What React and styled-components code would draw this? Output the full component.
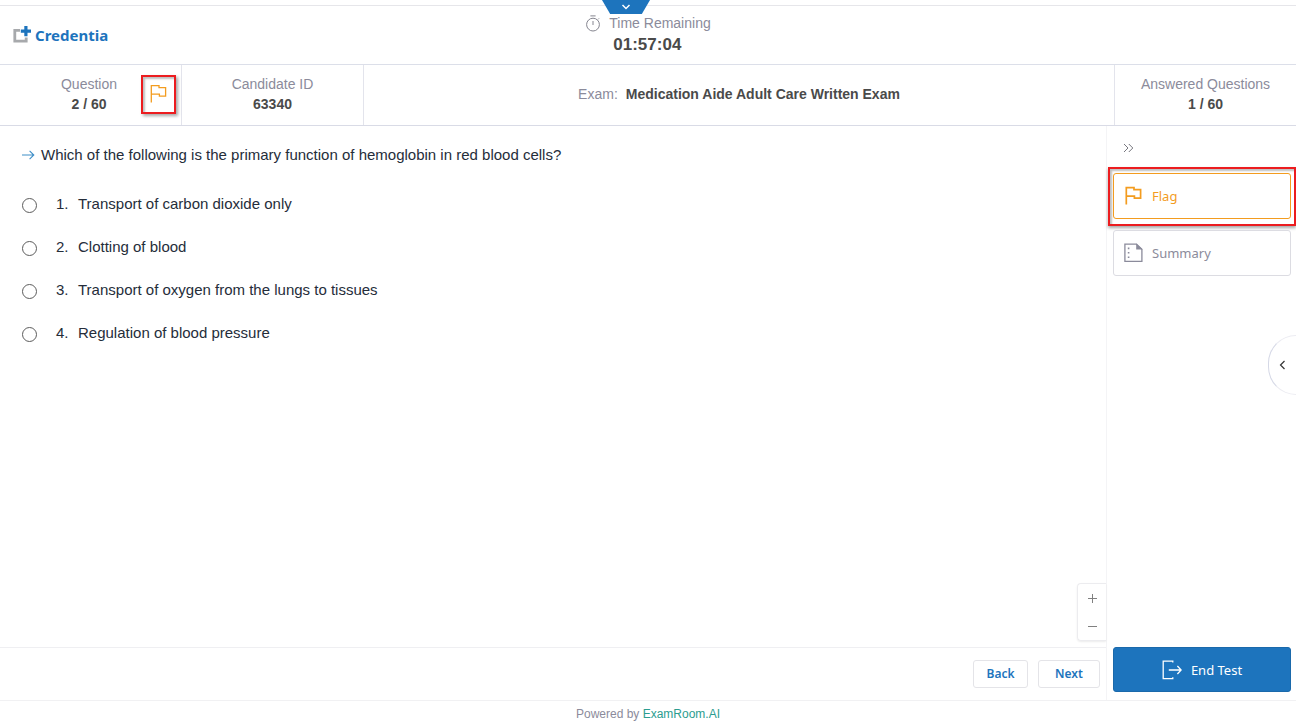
import React from "react";
import styled, { createGlobalStyle } from "styled-components";

const sans = '"Liberation Sans", Arial, sans-serif';
const humanist = '"Noto Sans", "Open Sans", sans-serif';
const blue = "#1d74bd";
const orange = "#f39c1f";
const grey = "#8b8b9b";
const red = "#ec1c1f";

const GlobalStyle = createGlobalStyle`
  *, *::before, *::after { box-sizing: border-box; }
  body { margin: 0; background: #fff; font-family: ${sans}; color: #4a4a4a; overflow-x: hidden; }
  button { font: inherit; cursor: pointer; padding: 0; margin: 0; }
  svg { display: block; flex: none; }
`;

const Page = styled.div`
  position: relative;
  display: flex;
  flex-direction: column;
  min-height: 100vh;
  padding-top: 5px;
`;

const PullTab = styled.button`
  position: absolute;
  top: 0;
  left: 50%;
  margin-left: -46px;
  width: 48px;
  height: 14px;
  border: 0;
  background: ${blue};
  clip-path: polygon(0 0, 100% 0, 83% 100%, 17% 100%);
  display: flex;
  align-items: center;
  justify-content: center;
`;

const Header = styled.header`
  display: grid;
  grid-template-columns: 1fr auto 1fr;
  align-items: center;
  height: 60px;
  padding: 0 13px;
  border-top: 1px solid #e6e6ea;
  border-bottom: 1px solid #dcdfe9;
`;

const Brand = styled.div`
  display: flex;
  align-items: center;
  gap: 4px;
  font: 700 15px/20px ${humanist};
  color: ${blue};
`;

const Timer = styled.div`
  display: flex;
  gap: 8px;
`;

const TimerIcon = styled.div`
  padding-top: 2px;
`;

const TimerLabel = styled.div`
  font-size: 14px;
  line-height: 20px;
  color: ${grey};
`;

const TimerValue = styled.div`
  font-size: 17px;
  line-height: 24px;
  font-weight: 700;
  padding-left: 4px;
`;

const InfoBar = styled.section`
  display: flex;
  height: 61px;
  border-bottom: 1px solid #d9dbe6;
`;

const InfoCell = styled.div`
  display: flex;
  align-items: center;
  justify-content: ${(p) => (p.$end ? "flex-end" : "center")};
  gap: ${(p) => (p.$end ? "24px" : "8px")};
  flex: ${(p) => (p.$grow ? "1" : "none")};
  width: ${(p) => (p.$grow ? "auto" : "182px")};
  padding-right: ${(p) => (p.$end ? "5px" : "0")};
  padding-bottom: 2px;
  border-right: 1px solid #e3e4ec;
  font-size: 14px;
  line-height: 20px;
  text-align: center;
  &:last-child { width: 181px; border-right: 0; }
`;

const Label = styled.div`
  color: ${grey};
`;

const Value = styled.div`
  font-weight: 700;
`;

const FlagMark = styled.button`
  width: 35px;
  height: 39px;
  display: flex;
  align-items: center;
  justify-content: center;
  background: #fff;
  border: 2px solid ${red};
  box-shadow: 2px 2px 3px rgba(0, 0, 0, 0.35), inset 2px 2px 2px rgba(0, 0, 0, 0.25);
`;

const Body = styled.div`
  flex: 1;
  display: flex;
  border-bottom: 1px solid #f1f1f3;
`;

const Main = styled.main`
  flex: 1;
  display: flex;
  flex-direction: column;
  border-right: 1px solid #f4f4f6;
`;

const Question = styled.form`
  flex: 1;
  padding: 19px 22px;
  font-size: 15px;
  line-height: 20px;
  color: #252d3a;
`;

const Prompt = styled.div`
  display: flex;
  align-items: center;
  gap: 6px;
  margin-bottom: 18px;
`;

const Option = styled.label`
  display: flex;
  align-items: center;
  height: 43px;
  padding-bottom: 1px;
  cursor: pointer;
`;

const Radio = styled.input`
  appearance: none;
  width: 15px;
  height: 15px;
  margin: 2px 19px 0 0;
  border: 1px solid #5c5c5c;
  border-radius: 50%;
  background: #fff;
  &:checked { border: 5px solid ${blue}; }
`;

const OptionNumber = styled.span`
  width: 22px;
`;

const Zoom = styled.div`
  align-self: flex-end;
  width: 29px;
  margin-bottom: 6px;
  border: 1px solid #ececef;
  border-right: 0;
  border-radius: 4px 0 0 4px;
  box-shadow: 0 1px 2px rgba(0, 0, 0, 0.08);
`;

const ZoomButton = styled.button`
  display: flex;
  align-items: center;
  justify-content: center;
  width: 100%;
  height: 28px;
  border: 0;
  background: none;
`;

const Pager = styled.nav`
  display: flex;
  align-items: center;
  justify-content: flex-end;
  gap: 10px;
  height: 53px;
  padding-right: 6px;
  border-top: 1px solid #efeff2;
`;

const PagerButton = styled.button`
  width: ${(p) => (p.$wide ? "62px" : "55px")};
  height: 28px;
  border: 1px solid #e4e4e8;
  border-radius: 3px;
  background: #fff;
  font: 600 12px/20px ${humanist};
  color: ${blue};
`;

const Side = styled.aside`
  flex: none;
  width: 189px;
  display: flex;
  flex-direction: column;
  padding: 14px 0 8px;
`;

const Collapse = styled.button`
  width: 40px;
  height: 16px;
  margin: 0 0 11px 1px;
  display: flex;
  align-items: center;
  justify-content: center;
  border: 0;
  background: none;
`;

const Highlight = styled.div`
  padding: 4px 3px 5px;
  border: 2px solid ${red};
  margin-left: 1px;
  box-shadow: 0 2px 3px rgba(0, 0, 0, 0.35), inset 2px 2px 2px rgba(0, 0, 0, 0.25);
`;

const SideButton = styled.button`
  display: flex;
  align-items: center;
  gap: 9px;
  width: 100%;
  height: 46px;
  padding-left: 10px;
  border: 1px solid ${(p) => (p.$active ? orange : "#dcdce2")};
  border-radius: 3px;
  background: #fff;
  font: 400 13px/20px ${humanist};
  color: ${(p) => (p.$active ? orange : grey)};
`;

const SideItem = styled.div`
  padding: 4px 5px 0 6px;
`;

const EndTest = styled.button`
  display: flex;
  align-items: center;
  justify-content: center;
  gap: 9px;
  height: 45px;
  margin: auto 5px 0 6px;
  border: 1px solid #1a69ab;
  border-radius: 3px;
  background: ${blue};
  font: 400 13px/20px ${humanist};
  color: #fff;
`;

const Drawer = styled.button`
  position: absolute;
  right: 0;
  top: 50%;
  width: 28px;
  height: 60px;
  margin-top: -28px;
  display: flex;
  align-items: center;
  justify-content: center;
  border: 1px solid #d5d8e6;
  border-right: 0;
  border-radius: 30px 0 0 30px;
  border-top-color: #ececf2;
  border-bottom-color: #ececf2;
  background: #fff;
`;

const Footer = styled.footer`
  height: 25px;
  padding-top: 3px;
  font-size: 12px;
  line-height: 20px;
  text-align: center;
  color: ${grey};
  a { color: #2c9d90; text-decoration: none; }
`;

const FlagIcon = ({ weight = 1.3 }) => (
  <svg width="19" height="20" viewBox="0 0 19 20" fill="none" stroke={orange} strokeWidth={weight}>
    <path d="M2.3 18.6V1.6H10v2h6.6v8.5h-6.2v-2H2.3" />
  </svg>
);

const options = [
  "Transport of carbon dioxide only",
  "Clotting of blood",
  "Transport of oxygen from the lungs to tissues",
  "Regulation of blood pressure",
];

export default function App() {
  return (
    <>
      <GlobalStyle />
      <Page>
        <Header>
          <Brand>
            <svg width="18" height="18" viewBox="0 0 18 18" fill="none">
              <path d="M7 4.4H1.8v10.8h11.4V11.6" stroke="#a7a9ac" strokeWidth="2.8" />
              <path d="M12.9 0v10.2M7.8 5.1H18" stroke={blue} strokeWidth="3.2" />
            </svg>
            Credentia
          </Brand>
          <Timer>
            <TimerIcon>
              <svg width="16" height="17" viewBox="0 0 16 17" fill="none" stroke="#85858f" strokeWidth="1">
                <circle cx="8" cy="9.6" r="6.4" />
                <path d="M5.4 .9h5.2M8 6v4M13 4.4l1-1" />
              </svg>
            </TimerIcon>
            <div>
              <TimerLabel>Time Remaining</TimerLabel>
              <TimerValue>01:57:04</TimerValue>
            </div>
          </Timer>
        </Header>
        <PullTab aria-label="Expand header">
          <svg width="10" height="6" viewBox="0 0 10 6" fill="none" stroke="#fff" strokeWidth="1.5">
            <path d="M1.5 1L5 4.5 8.5 1" />
          </svg>
        </PullTab>

        <InfoBar>
          <InfoCell $end>
            <div>
              <Label>Question</Label>
              <Value>2 / 60</Value>
            </div>
            <FlagMark aria-label="Flag question">
              <FlagIcon />
            </FlagMark>
          </InfoCell>
          <InfoCell>
            <div>
              <Label>Candidate ID</Label>
              <Value>63340</Value>
            </div>
          </InfoCell>
          <InfoCell $grow>
            <Label>Exam:</Label>
            <Value>Medication Aide Adult Care Written Exam</Value>
          </InfoCell>
          <InfoCell>
            <div>
              <Label>Answered Questions</Label>
              <Value>1 / 60</Value>
            </div>
          </InfoCell>
        </InfoBar>

        <Body>
          <Main>
            <Question>
              <Prompt>
                <svg width="13" height="12" viewBox="0 0 13 12" fill="none" stroke="#3f8fc8" strokeWidth="1.1">
                  <path d="M0 6h11.6M7.6 1.8L11.8 6l-4.2 4.2" />
                </svg>
                <span>Which of the following is the primary function of hemoglobin in red blood cells?</span>
              </Prompt>
              {options.map((text, i) => (
                <Option key={text}>
                  <Radio type="radio" name="answer" />
                  <OptionNumber>{i + 1}.</OptionNumber>
                  {text}
                </Option>
              ))}
            </Question>
            <Zoom>
              <ZoomButton aria-label="Zoom in">
                <svg width="9" height="9" viewBox="0 0 9 9" stroke="#808080" strokeWidth="1">
                  <path d="M0 4.5h9M4.5 0v9" />
                </svg>
              </ZoomButton>
              <ZoomButton aria-label="Zoom out">
                <svg width="9" height="9" viewBox="0 0 9 9" stroke="#808080" strokeWidth="1">
                  <path d="M0 4.5h9" />
                </svg>
              </ZoomButton>
            </Zoom>
            <Pager>
              <PagerButton>Back</PagerButton>
              <PagerButton $wide>Next</PagerButton>
            </Pager>
          </Main>
          <Side>
            <Collapse aria-label="Collapse panel">
              <svg width="11" height="10" viewBox="0 0 11 10" fill="none" stroke="#77777f" strokeWidth="1">
                <path d="M1 1l4 4-4 4M5.8 1l4 4-4 4" />
              </svg>
            </Collapse>
            <Highlight>
              <SideButton $active>
                <FlagIcon weight={1.7} />
                Flag
              </SideButton>
            </Highlight>
            <SideItem>
              <SideButton>
                <svg width="19" height="20" viewBox="0 0 19 20" fill="none" stroke={grey} strokeWidth="1.3">
                  <path d="M12.5 1.2H.9v17.2h17V6.2z" />
                  <path d="M12.2 .6v6h6.3z" fill={grey} stroke="none" />
                  <path d="M4.6 4.6v1.6M4.6 9v1.6M4.6 13.4V15" strokeWidth="1.6" />
                </svg>
                Summary
              </SideButton>
            </SideItem>
            <EndTest>
              <svg width="20" height="20" viewBox="0 0 20 20" fill="none" stroke="#fff" strokeWidth="1.3">
                <path d="M10.8 2.6V1.2H1.2v17.4h9.6v-1.4M6.8 10H19M15.4 6L19.2 10l-3.8 4" />
              </svg>
              End Test
            </EndTest>
          </Side>
        </Body>

        <Footer>
          Powered by <a href="#examroom">ExamRoom.AI</a>
        </Footer>
        <Drawer aria-label="Open drawer">
          <svg width="7" height="10" viewBox="0 0 7 10" fill="none" stroke="#333" strokeWidth="1.2">
            <path d="M5.5 1L1.5 5l4 4" />
          </svg>
        </Drawer>
      </Page>
    </>
  );
}
